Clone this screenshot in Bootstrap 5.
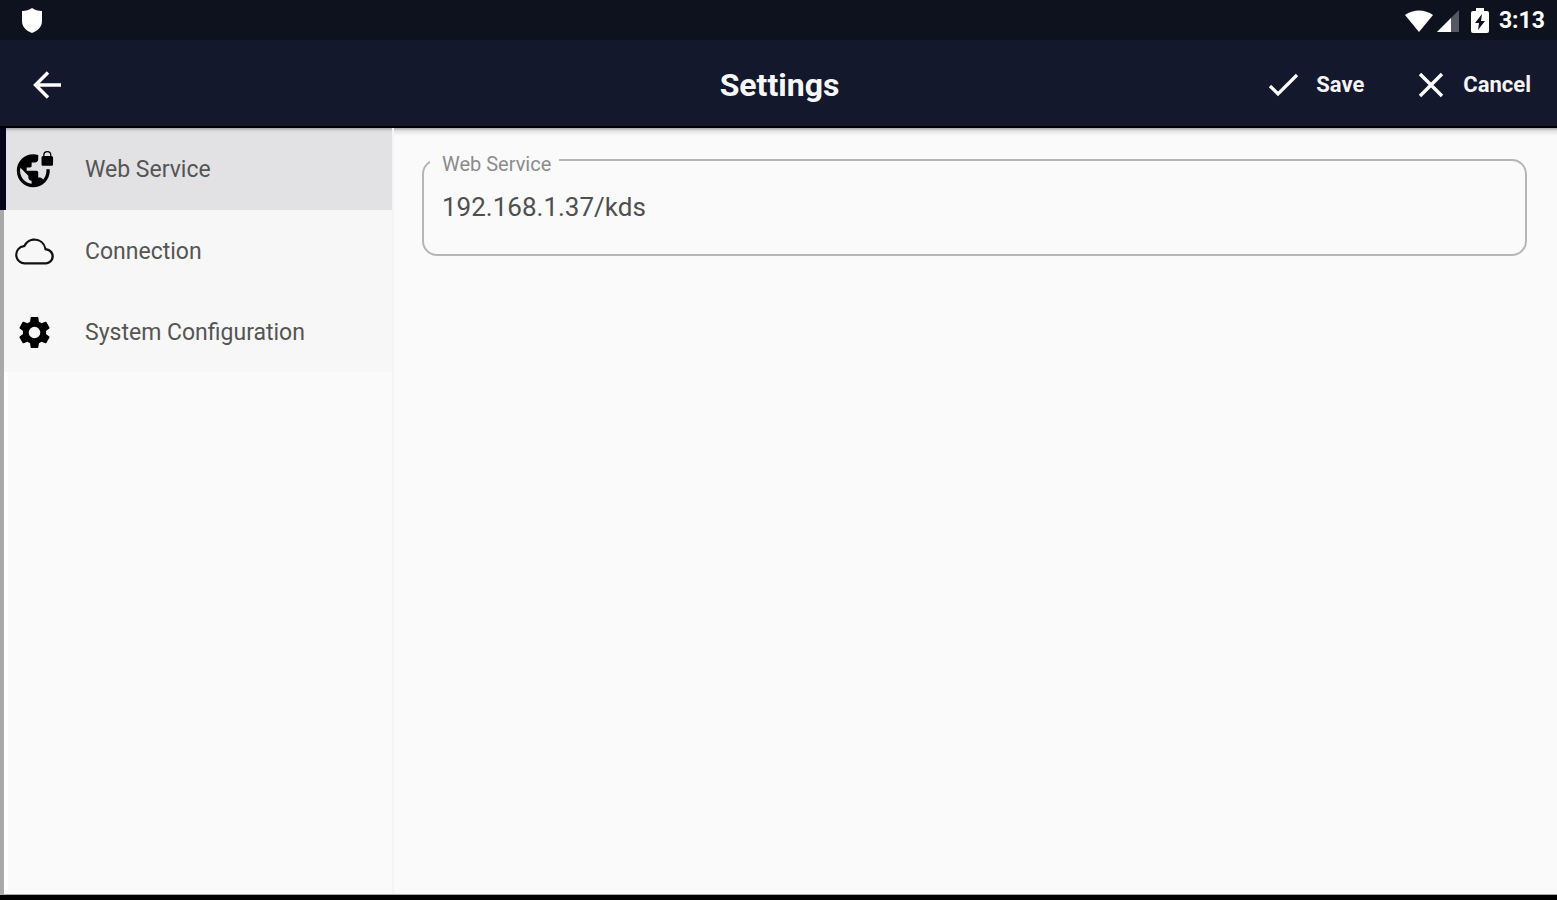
<!DOCTYPE html>
<html lang="en">
<head>
<meta charset="utf-8">
<meta name="viewport" content="width=device-width, initial-scale=1">
<title>Settings</title>
<link href="https://cdn.jsdelivr.net/npm/bootstrap@5.3.0/dist/css/bootstrap.min.css" rel="stylesheet">
<style>
  body { font-family: Roboto, "Liberation Sans", sans-serif; background: #fafafa; color: #4a4a4a; }
  .status-bar { height: 40px; background: #0e121f; padding: 1px 12px 0 16px; font-size: 23px; line-height: 40px; }
  .status-icons { gap: 10px; }
  .app-bar { height: 88px; background: #14182d; border-bottom: 2px solid #000; padding: 4px 26px 0 28px; }
  .app-bar h1 { font-size: 32px; font-weight: 700; line-height: 40px; color: #f8f8fa; }
  .bar-side { flex: 1 1 0; }
  .bar-actions { gap: 51px; }
  .bar-btn { font-size: 22px; line-height: 32px; font-weight: 700; color: #f4f4f6; background: none; border: 0; padding: 0; }
  .content-area { background: linear-gradient(#a5a5a7, #e4e4e4 3px, #fafafa 8px); }
  .side-menu { width: 394px; border-right: 2px solid #f5f5f5; background: linear-gradient(90deg, #a9a9a9 4px, #fff 4px, #fff 7px, #fafafa 8px); }
  .menu-row { height: 81px; padding: 2px 0 0 9px; font-size: 23px; line-height: 32px; color: #555; background: #f7f7f7; border-left: 4px solid #a9a9a9; text-decoration: none; }
  .menu-row svg { margin-right: 29px; }
  .menu-row.current { height: 82px; background: linear-gradient(#a5a5a7, #dcdcde 3px, #e2e2e4 6px); border-left: 6px solid #04051b; padding-left: 7px; }
  .main-pane { padding: 31px 30px 30px 28px; }
  .field-label { left: 8px; top: -8px; padding: 0 8px 0 12px; font-size: 20px; line-height: 26px; color: #8c8c8c; background: #fafafa; }
  .field-input { height: 97px; border: 2px solid #b5b5b5; border-radius: 15px; padding: 0 18px 2px; font-size: 26px; line-height: 32px; color: #4f4f4f; background: transparent; }
  .bottom-bar { height: 5px; background: #000; box-shadow: 0 -1px 0 #aaa; }
</style>
</head>
<body class="d-flex flex-column min-vh-100">
<div class="status-bar d-flex align-items-center text-white">
  <svg width="32" height="32" viewBox="0 0 32 32" fill="#fff" aria-hidden="true"><path d="M16 3Q20 6 26 6v10c0 6-4 9.500-10 12C10 25.500 6 22 6 16V6Q12 6 16 3z"/></svg>
  <div class="status-icons d-flex align-items-center ms-auto">
    <div class="d-flex align-items-center gap-1">
      <svg width="28" height="22" viewBox="0 0 28 22" fill="#fff" aria-hidden="true"><path d="M0 5C8-1 20-1 28 5L14 22z"/></svg>
      <svg width="24" height="24" viewBox="0 0 24 24" aria-hidden="true"><path d="M0 23 22 1v22z" fill="#555864"/><path d="M0 23 14 9v14z" fill="#fff"/></svg>
    </div>
    <svg width="18" height="26" viewBox="0 0 18 26" aria-hidden="true"><path d="M5 3V0h8v3h3q2 0 2 2v18q0 2-2 2H2q-2 0-2-2V5q0-2 2-2z" fill="#fff"/><path d="M11 6 4 15h4l-1 7 7-9h-4z" fill="#0e121f"/></svg>
    <span class="fw-bold">3:13</span>
  </div>
</div>
<header class="app-bar d-flex align-items-center text-white">
  <div class="bar-side d-flex">
    <button type="button" class="bar-btn d-flex" aria-label="Back"><svg width="40" height="40" viewBox="0 0 40 40" fill="none" stroke="#fff" stroke-width="3.400"><path d="M33 20H9M20 7.500 7.500 20 20 32.500"/></svg></button>
  </div>
  <h1 class="m-0">Settings</h1>
  <div class="bar-side bar-actions d-flex justify-content-end">
    <button type="button" class="bar-btn d-flex align-items-center"><svg class="me-3" width="32" height="32" viewBox="0 0 32 32" fill="none" stroke="#fff" stroke-width="3.200" aria-hidden="true"><path d="m2 17 8 8L29 6"/></svg>Save</button>
    <button type="button" class="bar-btn d-flex align-items-center"><svg class="me-3" width="32" height="32" viewBox="0 0 32 32" fill="none" stroke="#fff" stroke-width="3.400" aria-hidden="true"><path d="m5 5 22 22M27 5 5 27"/></svg>Cancel</button>
  </div>
</header>
<div class="content-area d-flex flex-grow-1">
  <nav class="side-menu flex-shrink-0" aria-label="Settings sections">
    <a href="#web" class="menu-row current d-flex align-items-center" aria-current="page">
      <svg width="43" height="43" viewBox="0 0 24 24" fill="#000" aria-hidden="true"><path transform="translate(1.200 .2) scale(.92)" d="M22 4v-.5a2.500 2.500 0 0 0-5 0V4c-.55 0-1 .45-1 1v4c0 .55.45 1 1 1h5c.55 0 1-.45 1-1V5c0-.55-.45-1-1-1zm-.8 0h-3.400v-.5a1.700 1.700 0 0 1 3.400 0V4zm-2.280 8c.04.33.08.66.08 1 0 2.080-.8 3.970-2.100 5.390-.26-.81-1-1.390-1.900-1.390h-1v-3c0-.55-.45-1-1-1H7v-2h2c.55 0 1-.45 1-1V8h2c1.100 0 2-.9 2-2V3.460A9.900 9.900 0 0 0 11 3C5.480 3 1 7.480 1 13s4.480 10 10 10 10-4.480 10-10c0-.34-.02-.67-.05-1h-2.030zM10 20.930c-3.950-.49-7-3.850-7-7.930 0-.62.08-1.210.21-1.790L8 16v1c0 1.100.9 2 2 2v1.930z"/></svg>
      Web Service</a>
    <a href="#connection" class="menu-row d-flex align-items-center">
      <svg width="43" height="43" viewBox="0 0 24 24" fill="#111" aria-hidden="true"><path d="M19.350 10.040A7.490 7.490 0 0 0 12 4C9.110 4 6.600 5.640 5.350 8.040A5.994 5.994 0 0 0 0 14c0 3.310 2.690 6 6 6h13c2.760 0 5-2.240 5-5 0-2.640-2.050-4.780-4.650-4.960zM19 18.700H6A4.700 4.700 0 0 1 5.500 9.330l.7-.1.300-.6A6.200 6.200 0 0 1 18.070 10.300l.2.950 1 .1A3.690 3.690 0 0 1 19 18.700z" transform="translate(1.200 1.200) scale(.9)"/></svg>
      Connection</a>
    <a href="#system" class="menu-row d-flex align-items-center">
      <svg width="43" height="43" viewBox="0 0 24 24" fill="#000" aria-hidden="true"><path d="M19.140 12.940c.04-.3.060-.61.060-.94 0-.32-.02-.64-.07-.94l2.030-1.580a.49.49 0 0 0 .12-.61l-1.920-3.320a.488.488 0 0 0-.59-.22l-2.390.96c-.5-.38-1.030-.7-1.620-.94l-.36-2.540a.484.484 0 0 0-.48-.41h-3.840c-.24 0-.43.17-.47.41l-.36 2.540c-.59.24-1.130.57-1.620.94l-2.390-.96c-.22-.08-.47 0-.59.22L2.740 8.870c-.12.21-.08.47.12.61l2.030 1.580c-.05.3-.09.63-.09.94s.02.64.07.94l-2.030 1.580a.49.49 0 0 0-.12.61l1.920 3.320c.12.22.37.29.59.22l2.390-.96c.5.38 1.030.7 1.620.94l.36 2.540c.05.24.24.41.48.41h3.840c.24 0 .44-.17.47-.41l.36-2.540c.59-.24 1.130-.56 1.620-.94l2.390.96c.22.08.47 0 .59-.22l1.920-3.320c.12-.22.070-.47-.12-.61l-2.010-1.580zM12 15.600A3.600 3.600 0 1 1 12 8.400a3.600 3.600 0 0 1 0 7.200z" transform="translate(1.200 1.200) scale(.9)"/></svg>
      System Configuration</a>
  </nav>
  <main class="main-pane flex-grow-1">
    <div class="position-relative">
      <label for="service" class="field-label position-absolute">Web Service</label>
      <input id="service" type="text" class="field-input w-100 d-block" value="192.168.1.37/kds">
    </div>
  </main>
</div>
<footer class="bottom-bar"></footer>
<script src="https://cdn.jsdelivr.net/npm/bootstrap@5.3.0/dist/js/bootstrap.bundle.min.js"></script>
</body>
</html>
